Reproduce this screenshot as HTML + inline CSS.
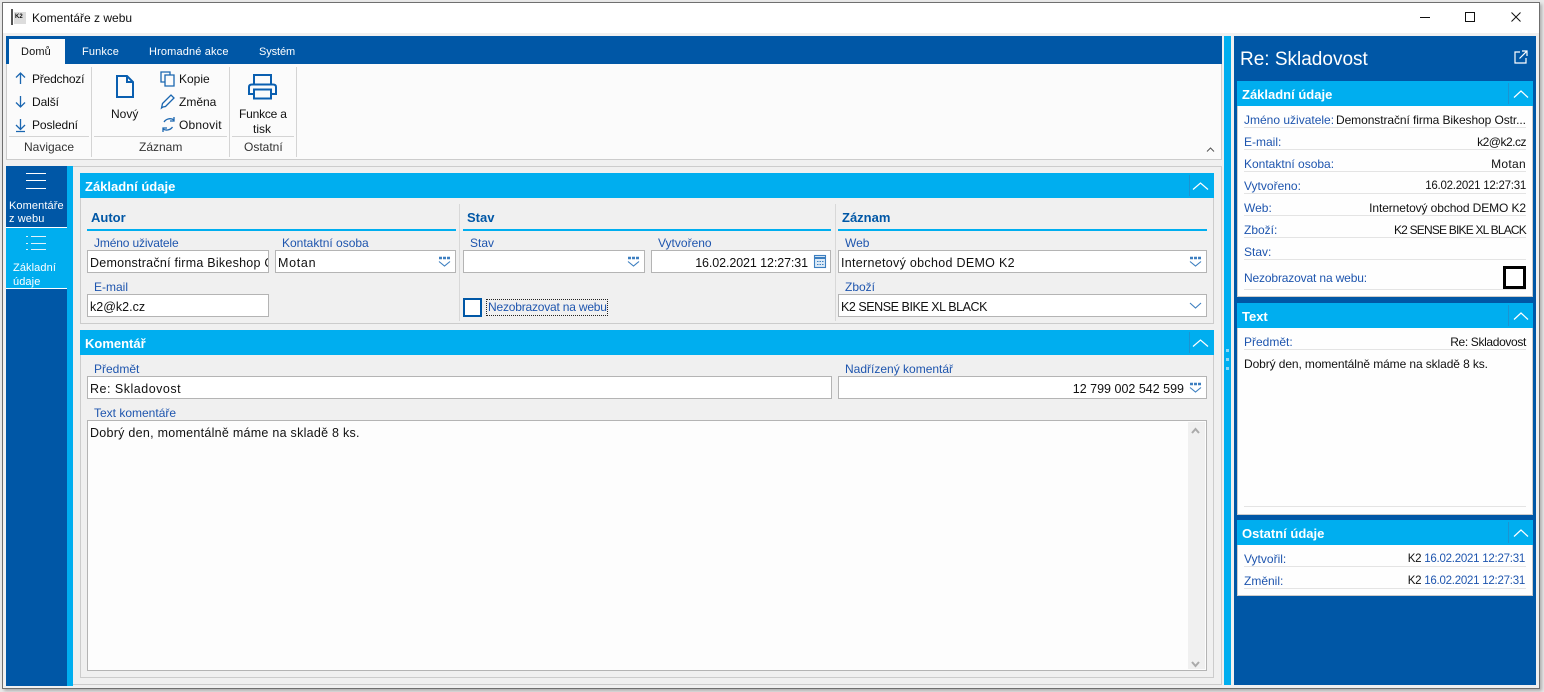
<!DOCTYPE html>
<html><head><meta charset="utf-8"><style>
html,body{margin:0;padding:0;width:1544px;height:692px;overflow:hidden;background:#e9e9e9}
*{box-sizing:border-box}
body{font:12px/16px "Liberation Sans","DejaVu Sans",sans-serif;color:#111;position:relative;letter-spacing:0}
.a,.t,.l,.i,.v{position:absolute}
.t,.l,.v{white-space:nowrap}
.l{color:#1e55ae}
.w{color:#fff}
.i{background:#fff;border:1px solid #b4b4b4;height:23px;line-height:23px;padding:1px 0 0 2px;overflow:hidden;white-space:nowrap;font-size:12.5px;letter-spacing:.25px}
.h{position:absolute;background:#00aeef;color:#fff;font-weight:bold;font-size:13px;height:25px;line-height:27px;padding-left:5px}
.h:after{content:"";position:absolute;right:24px;top:2px;bottom:2px;width:1px;background:#1a94d2}
.b{position:absolute;background:#0057a6}
.hd{position:absolute;color:#0057a6;font-weight:bold;font-size:13px}
.ln{position:absolute;height:2px;background:#00aeef}
.r{position:absolute;left:1244px;width:282px;height:1px;background:#e4e4e4}
.v{right:18px;text-align:right;color:#111}
.d{font-size:11.5px;letter-spacing:-.25px}
svg{position:absolute;overflow:visible}
</style></head><body>
<div class="a" style="left:2px;top:2px;width:1538px;height:687px;background:#f0f0f0;border:1px solid #6f6f6f;box-shadow:2px 2px 3px rgba(0,0,0,.25)"></div>
<div class="a" style="left:3px;top:3px;width:1536px;height:30px;background:#fff"></div>
<div class="a" style="left:11px;top:9px;width:2px;height:16px;background:#555"></div>
<div class="a" style="left:14px;top:12px;width:12px;height:12px;background:#ddd"></div>
<div class="t" style="left:15px;top:13px;font-size:6px;line-height:8px;font-weight:bold;letter-spacing:0">K2</div>
<div class="t" style="left:32px;top:10px;font-size:12px">Komentáře z webu</div>
<svg style="left:1420px;top:10px" width="110" height="16" fill="none" stroke="#111" stroke-width="1"><path d="M0 7.500H10"/><rect x="45.500" y="2.500" width="9" height="9"/><path d="M91.500 2.500L100.500 11.500M100.500 2.500L91.500 11.500"/></svg>

<!-- ribbon -->
<div class="b" style="left:6px;top:36px;width:1216px;height:28px"></div>
<div class="a" style="left:9px;top:39px;width:56px;height:25px;background:#fbfbfb"></div>
<div class="t" style="left:21px;top:44px;font-size:11px;letter-spacing:.15px">Domů</div>
<div class="t w" style="left:82px;top:44px;font-size:11px;letter-spacing:.15px">Funkce</div>
<div class="t w" style="left:149px;top:44px;font-size:11px;letter-spacing:.15px">Hromadné akce</div>
<div class="t w" style="left:259px;top:44px;font-size:11px;letter-spacing:-.1px">Systém</div>
<div class="a" style="left:6px;top:64px;width:1216px;height:96px;background:#fbfbfb;border:1px solid #ccc;border-top:0"></div>
<div class="a" style="left:91px;top:67px;width:1px;height:90px;background:#d4d4d4"></div>
<div class="a" style="left:229px;top:67px;width:1px;height:90px;background:#d4d4d4"></div>
<div class="a" style="left:296px;top:67px;width:1px;height:90px;background:#d4d4d4"></div>
<div class="a" style="left:9px;top:136px;width:80px;height:1px;background:#d4d4d4"></div>
<div class="a" style="left:94px;top:136px;width:133px;height:1px;background:#d4d4d4"></div>
<div class="a" style="left:232px;top:136px;width:62px;height:1px;background:#d4d4d4"></div>
<svg style="left:0;top:0" width="300" height="160" fill="none" stroke="#1a66b0" stroke-width="1.300">
<path d="M20.500 84V73M16 77.500L20.500 73L25 77.500"/>
<path d="M20.500 96V107M16 102.500L20.500 107L25 102.500"/>
<path d="M20.500 119V129M16 125L20.500 129.500L25 125M16 131.500H25"/>
<path d="M117 76H127L133 82V97H117ZM127 76V82H133" stroke="#0a5fb0" stroke-width="2"/>
<path d="M165 82H161V72H170V75M165 75H174V86H165Z"/>
<path d="M163 107L161.500 108L162.500 103.500L171 95L174 98L165.500 106.500Z"/>
<path d="M164 122A7 7 0 0 1 174 120M174 117V121H170M172.500 127A7 7 0 0 1 163 129M163 132V128H167"/>
<path d="M254 84V75H271V84M254 94H249V87Q249 84.500 252 84.500H273Q276 84.500 276 87V94H271M254 89.500H271V98.500H254Z" stroke="#0a5fb0" stroke-width="2"/>
<path d="M1207 151.500L1210.500 148L1214 151.500" stroke="#555" stroke-width="1"/>
</svg>
<div class="t" style="left:32px;top:71px;letter-spacing:-.2px">Předchozí</div>
<div class="t" style="left:32px;top:94px;letter-spacing:-.1px">Další</div>
<div class="t" style="left:32px;top:117px;letter-spacing:-.1px">Poslední</div>
<div class="t" style="left:111px;top:106px">Nový</div>
<div class="t" style="left:179px;top:71px">Kopie</div>
<div class="t" style="left:179px;top:94px">Změna</div>
<div class="t" style="left:179px;top:117px;letter-spacing:.2px">Obnovit</div>
<div class="t" style="left:239px;top:106px;letter-spacing:-.2px">Funkce a</div>
<div class="t" style="left:253px;top:121px">tisk</div>
<div class="t" style="left:24px;top:139px;color:#333">Navigace</div>
<div class="t" style="left:139px;top:139px;color:#333">Záznam</div>
<div class="t" style="left:244px;top:139px;color:#333">Ostatní</div>

<!-- left nav -->
<div class="b" style="left:6px;top:166px;width:61px;height:520px"></div>
<div class="a" style="left:67px;top:166px;width:6px;height:520px;background:#00aeef"></div>
<div class="a" style="left:6px;top:227px;width:61px;height:1px;background:#fff"></div>
<div class="a" style="left:6px;top:228px;width:61px;height:61px;background:#00aeef;border-bottom:1px solid #fff"></div>
<svg style="left:0;top:0" width="70" height="260" stroke="#fff" stroke-width="1" fill="none"><path d="M26 173.500H46M26 180.500H46M26 188.500H46"/><path d="M26 236.500H28M31 236.500H46M26 243.500H28M31 243.500H46M26 249.500H28M31 249.500H46" stroke="#dff4fd"/></svg>
<div class="t w" style="left:9px;top:200px;font-size:11px;line-height:13px;letter-spacing:.1px">Komentáře<br>z webu</div>
<div class="t w" style="left:13px;top:261px;font-size:11px;line-height:14px;letter-spacing:.1px">Základní<br>údaje</div>

<!-- main -->
<div class="a" style="left:73px;top:166px;width:1149px;height:519px;border:1px solid #ccc;border-left:0;border-bottom:1px solid #ccc"></div>
<div class="a" style="left:80px;top:173px;width:1134px;height:151px;border:1px solid #ccc"></div>
<div class="h" style="left:80px;top:173px;width:1134px">Základní údaje</div>
<svg style="left:1191px;top:182px" width="20" height="10" fill="none" stroke="#fff" stroke-width="1.200"><path d="M2 7.500L9.500 1L17 7.500"/></svg>
<div class="a" style="left:459px;top:204px;width:1px;height:117px;background:#d8d8d8"></div>
<div class="a" style="left:835px;top:204px;width:1px;height:117px;background:#d8d8d8"></div>
<div class="hd" style="left:91px;top:210px">Autor</div><div class="ln" style="left:87px;top:229px;width:369px"></div>
<div class="hd" style="left:467px;top:210px">Stav</div><div class="ln" style="left:463px;top:229px;width:368px"></div>
<div class="hd" style="left:842px;top:210px">Záznam</div><div class="ln" style="left:838px;top:229px;width:369px"></div>

<div class="l" style="left:94px;top:235px;letter-spacing:-.15px">Jméno uživatele</div>
<div class="i" style="left:87px;top:250px;width:182px">Demonstrační firma Bikeshop Ostrava</div>
<div class="l" style="left:282px;top:235px">Kontaktní osoba</div>
<div class="i" style="left:275px;top:250px;width:181px;letter-spacing:.7px">Motan</div>
<div class="l" style="left:94px;top:279px">E-mail</div>
<div class="i" style="left:87px;top:294px;width:182px;letter-spacing:0">k2@k2.cz</div>
<div class="l" style="left:470px;top:235px">Stav</div>
<div class="i" style="left:463px;top:250px;width:182px"></div>
<div class="l" style="left:658px;top:235px">Vytvořeno</div>
<div class="i" style="left:651px;top:250px;width:180px;text-align:right;padding-right:22px;letter-spacing:-.1px">16.02.2021 12:27:31</div>
<div class="a" style="left:463px;top:298px;width:19px;height:19px;background:#fff;border:2px solid #0057a6"></div>
<div class="l" style="left:486px;top:299px;width:122px;height:17px;border:1px dotted #222;line-height:15px;padding-left:1px;letter-spacing:-.2px">Nezobrazovat na webu</div>
<div class="l" style="left:845px;top:235px">Web</div>
<div class="i" style="left:838px;top:250px;width:369px;letter-spacing:.3px">Internetový obchod DEMO K2</div>
<div class="l" style="left:845px;top:279px">Zboží</div>
<div class="i" style="left:838px;top:294px;width:369px;letter-spacing:-.45px">K2 SENSE BIKE XL BLACK</div>

<div class="a" style="left:80px;top:330px;width:1134px;height:348px;border:1px solid #ccc"></div>
<div class="h" style="left:80px;top:330px;width:1134px">Komentář</div>
<svg style="left:1191px;top:339px" width="20" height="10" fill="none" stroke="#fff" stroke-width="1.200"><path d="M2 7.500L9.500 1L17 7.500"/></svg>
<div class="l" style="left:94px;top:361px">Předmět</div>
<div class="i" style="left:87px;top:376px;width:745px;letter-spacing:.5px">Re: Skladovost</div>
<div class="l" style="left:845px;top:361px">Nadřízený komentář</div>
<div class="i" style="left:838px;top:376px;width:369px;text-align:right;padding-right:22px;letter-spacing:0">12 799 002 542 599</div>
<div class="l" style="left:94px;top:405px">Text komentáře</div>
<div class="i" style="left:87px;top:420px;width:1120px;height:251px;line-height:24px;background:#fdfdfd;letter-spacing:.27px;padding-top:0">Dobrý den, momentálně máme na skladě 8 ks.</div>
<div class="a" style="left:1188px;top:422px;width:17px;height:247px;background:#f0f0f0"></div>
<svg style="left:0;top:0" width="1230" height="680" fill="none" stroke="#3d7fc0" stroke-width="1.100">
<path d="M628 258H631M632 258H635M636 258H639" stroke-width="2.400"/><path d="M628 261.500L633.500 266L639 261.500"/>
<path d="M439 258H442M443 258H446M447 258H450" stroke-width="2.400"/><path d="M439 261.500L444.500 266L450 261.500"/>
<path d="M1190 258H1193M1194 258H1197M1198 258H1201" stroke-width="2.400"/><path d="M1190 261.500L1195.500 266L1201 261.500"/>
<path d="M1190 384H1193M1194 384H1197M1198 384H1201" stroke-width="2.400"/><path d="M1190 387.500L1195.500 392L1201 387.500"/>
<path d="M1190 303L1195.500 308L1201 303"/>
<rect x="814.500" y="255.500" width="11" height="12" fill="#dbe9f6"/><path d="M814.500 258H825.500" stroke-width="2"/><path d="M817 261.500H824M817 264.500H824" stroke-dasharray="1.500 1" />
<path d="M1192 433L1195.500 429L1199 433M1192 662L1195.500 666L1199 662" stroke="#aaa" stroke-width="2"/>
</svg>

<!-- splitter and right panel -->
<div class="a" style="left:1224px;top:36px;width:7px;height:649px;background:#00aeef"></div>
<div class="a" style="left:1226px;top:349px;width:3px;height:24px;background:repeating-linear-gradient(#8fd8f6 0 3px,transparent 3px 9px)"></div>
<div class="b" style="left:1234px;top:36px;width:302px;height:649px"></div>
<div class="t w" style="left:1240px;top:47px;font-size:19px;line-height:26px">Re: Skladovost</div>
<svg style="left:1514px;top:50px" width="14" height="14" fill="none" stroke="#fff" stroke-width="1.200"><path d="M6 2H1V13H12V8M8 1H13V6M13 1L5.500 8.500"/></svg>

<div class="a" style="left:1237px;top:81px;width:296px;height:216px;background:#fefefe;border:1px solid #ccc"></div>
<div class="h" style="left:1237px;top:81px;width:296px">Základní údaje</div>
<svg style="left:1513px;top:90px" width="20" height="10" fill="none" stroke="#fff" stroke-width="1.200"><path d="M1 7.500L8 1L15 7.500"/></svg>
<div class="a" style="left:1237px;top:303px;width:296px;height:212px;background:#fefefe;border:1px solid #ccc"></div>
<div class="h" style="left:1237px;top:303px;width:296px">Text</div>
<svg style="left:1513px;top:312px" width="20" height="10" fill="none" stroke="#fff" stroke-width="1.200"><path d="M1 7.500L8 1L15 7.500"/></svg>
<div class="a" style="left:1237px;top:520px;width:296px;height:76px;background:#fefefe;border:1px solid #ccc"></div>
<div class="h" style="left:1237px;top:520px;width:296px">Ostatní údaje</div>
<svg style="left:1513px;top:529px" width="20" height="10" fill="none" stroke="#fff" stroke-width="1.200"><path d="M1 7.500L8 1L15 7.500"/></svg>

<div class="r" style="top:127px"></div><div class="r" style="top:149px"></div><div class="r" style="top:171px"></div><div class="r" style="top:193px"></div><div class="r" style="top:215px"></div><div class="r" style="top:237px"></div><div class="r" style="top:259px"></div><div class="r" style="top:289px"></div><div class="r" style="top:349px"></div><div class="r" style="top:506px"></div><div class="r" style="top:566px"></div><div class="r" style="top:588px"></div>

<div class="l" style="left:1244px;top:112px">Jméno uživatele:</div><div class="t" style="left:1336px;top:112px;letter-spacing:-.08px">Demonstrační firma Bikeshop Ostr...</div>
<div class="l" style="left:1244px;top:134px">E-mail:</div><div class="v" style="top:134px;letter-spacing:-.5px">k2@k2.cz</div>
<div class="l" style="left:1244px;top:156px">Kontaktní osoba:</div><div class="v" style="top:156px;letter-spacing:.3px">Motan</div>
<div class="l" style="left:1244px;top:178px">Vytvořeno:</div><div class="v d" style="top:178px">16.02.2021 12:27:31</div>
<div class="l" style="left:1244px;top:200px">Web:</div><div class="v" style="top:200px;letter-spacing:-.1px">Internetový obchod DEMO K2</div>
<div class="l" style="left:1244px;top:222px">Zboží:</div><div class="v" style="top:222px;letter-spacing:-.8px">K2 SENSE BIKE XL BLACK</div>
<div class="l" style="left:1244px;top:244px">Stav:</div>
<div class="l" style="left:1244px;top:270px;letter-spacing:-.15px">Nezobrazovat na webu:</div>
<div class="a" style="left:1503px;top:266px;width:23px;height:23px;background:#fff;border:3px solid #000"></div>
<div class="l" style="left:1244px;top:334px">Předmět:</div><div class="v" style="top:334px;letter-spacing:-.35px">Re: Skladovost</div>
<div class="t" style="left:1244px;top:356px;letter-spacing:-.1px">Dobrý den, momentálně máme na skladě 8 ks.</div>
<div class="l" style="left:1244px;top:551px">Vytvořil:</div><div class="v d" style="top:551px;right:19px">K2 <span style="color:#1e55ae">16.02.2021 12:27:31</span></div>
<div class="l" style="left:1244px;top:573px">Změnil:</div><div class="v d" style="top:573px;right:19px">K2 <span style="color:#1e55ae">16.02.2021 12:27:31</span></div>
</body></html>
